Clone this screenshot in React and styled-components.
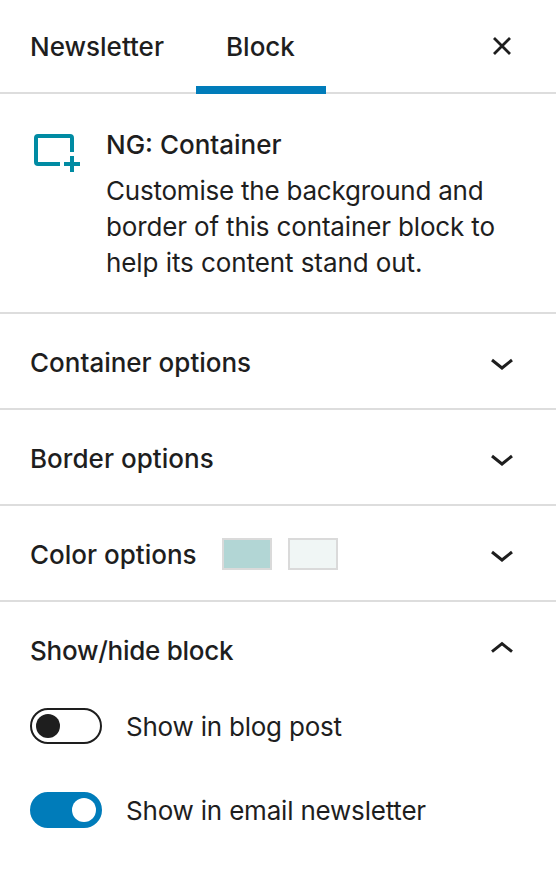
import React from 'react';
import styled, { createGlobalStyle } from 'styled-components';

const GlobalStyle = createGlobalStyle`
  * { box-sizing: border-box; }
  body { margin: 0; background: #fff; color: #1e1e1e; font-family: Inter, "Liberation Sans", sans-serif; }
  button { font: inherit; color: inherit; background: none; border: 0; padding: 0; }
`;

const Sidebar = styled.aside`
  width: 556px;
  height: 880px;
  overflow: hidden;
  background: #fff;
  font-size: 26px;
`;

const Tabs = styled.header`
  display: flex;
  height: 94px;
  border-bottom: 2px solid #ddd;
`;

const Tab = styled.button`
  width: ${(p) => p.$width}px;
  height: 94px;
  padding: 6px 0 0 30px;
  text-align: left;
  font-weight: 500;
  white-space: nowrap;
  border-bottom: 8px solid ${(p) => (p.$active ? '#007cba' : 'transparent')};
`;

const Close = styled.button`
  display: flex;
  margin: 36px 44px 0 auto;
  width: 20px;
  height: 20px;
`;

const Card = styled.section`
  display: flex;
  gap: 24px;
  height: 220px;
  padding: 33px 30px 0;
  border-bottom: 2px solid #ddd;
`;

const CardIcon = styled.div`
  width: 52px;
  flex: none;
`;

const Text = styled.span`
  display: block;
  width: fit-content;
  white-space: nowrap;
  font-weight: ${(p) => (p.$strong ? 500 : 400)};
  line-height: 36px;
  padding-top: ${(p) => (p.$lowered ? 2 : 0)}px;
  letter-spacing: ${(p) => p.$spacing || 0}px;
`;

const Description = styled.div`
  margin-top: 10px;
`;

const PanelRow = styled.button`
  display: flex;
  align-items: center;
  width: 100%;
  height: 96px;
  padding: 2px 42px 0 30px;
  border-bottom: ${(p) => (p.$open ? 0 : '2px solid #ddd')};
`;

const Swatches = styled.span`
  display: flex;
  gap: 16px;
  margin-left: 25.5px;
`;

const Swatch = styled.span`
  width: 50px;
  height: 32px;
  border: 2px solid #dadada;
  background: ${(p) => p.$color};
`;

const Chevron = styled.svg`
  display: block;
  width: 24px;
  height: 24px;
  margin-left: auto;
`;

const Options = styled.div`
  display: grid;
  gap: 48px;
  padding: 10px 30px;
`;

const ToggleRow = styled.label`
  display: flex;
  align-items: center;
  gap: 24px;
  height: 36px;
`;

const Track = styled.span`
  display: flex;
  align-items: center;
  justify-content: ${(p) => (p.$on ? 'flex-end' : 'flex-start')};
  width: 72px;
  height: 36px;
  padding: 4px;
  border-radius: 18px;
  border: 2px solid ${(p) => (p.$on ? '#007cba' : '#1e1e1e')};
  background: ${(p) => (p.$on ? '#007cba' : '#fff')};
`;

const Thumb = styled.span`
  width: 24px;
  height: 24px;
  border-radius: 50%;
  background: ${(p) => (p.$on ? '#fff' : '#1e1e1e')};
`;

function Panel({ title, spacing, open, children }) {
  return (
    <PanelRow $open={open}>
      <Text $strong $lowered={!open} $spacing={spacing}>{title}</Text>
      {children}
      <Chevron viewBox="0 0 24 24" fill="none" stroke="#1e1e1e" strokeWidth="3">
        <path d={open ? 'M2 12.7 12 4.7l10 8' : 'M2 10l10 8 10-8'} />
      </Chevron>
    </PanelRow>
  );
}

function Toggle({ label, spacing, on }) {
  return (
    <ToggleRow>
      <Track $on={on}><Thumb $on={on} /></Track>
      <Text $lowered $spacing={spacing}>{label}</Text>
    </ToggleRow>
  );
}

export default function App() {
  return (
    <Sidebar>
      <GlobalStyle />
      <Tabs>
        <Tab $width={196}>Newsletter</Tab>
        <Tab $width={130} $active>Block</Tab>
        <Close aria-label="Close">
          <svg width="20" height="20" viewBox="0 0 20 20" stroke="#1e1e1e" strokeWidth="2.8"><path d="M2 2l16 16M18 2 2 18" /></svg>
        </Close>
      </Tabs>
      <Card>
        <CardIcon>
          <svg width="52" height="48" viewBox="0 0 52 48" fill="none" stroke="#008ba3" strokeWidth="4">
            <path d="M30 37H8a2 2 0 0 1-2-2V11a2 2 0 0 1 2-2h32a2 2 0 0 1 2 2v14M34 37h16M42 29v16" />
          </svg>
        </CardIcon>
        <div>
          <Text $strong>NG: Container</Text>
          <Description>
            <Text $spacing={-0.22}>Customise the background and</Text>
            <Text $spacing={-0.15}>border of this container block to</Text>
            <Text $spacing={-0.08}>help its content stand out.</Text>
          </Description>
        </div>
      </Card>
      <Panel title="Container options" />
      <Panel title="Border options" spacing={0.04} />
      <Panel title="Color options">
        <Swatches><Swatch $color="#b2d6d5" /><Swatch $color="#f0f6f5" /></Swatches>
      </Panel>
      <Panel title="Show/hide block" spacing={-0.27} open />
      <Options>
        <Toggle label="Show in blog post" spacing={-0.22} />
        <Toggle label="Show in email newsletter" spacing={-0.2} on />
      </Options>
    </Sidebar>
  );
}
